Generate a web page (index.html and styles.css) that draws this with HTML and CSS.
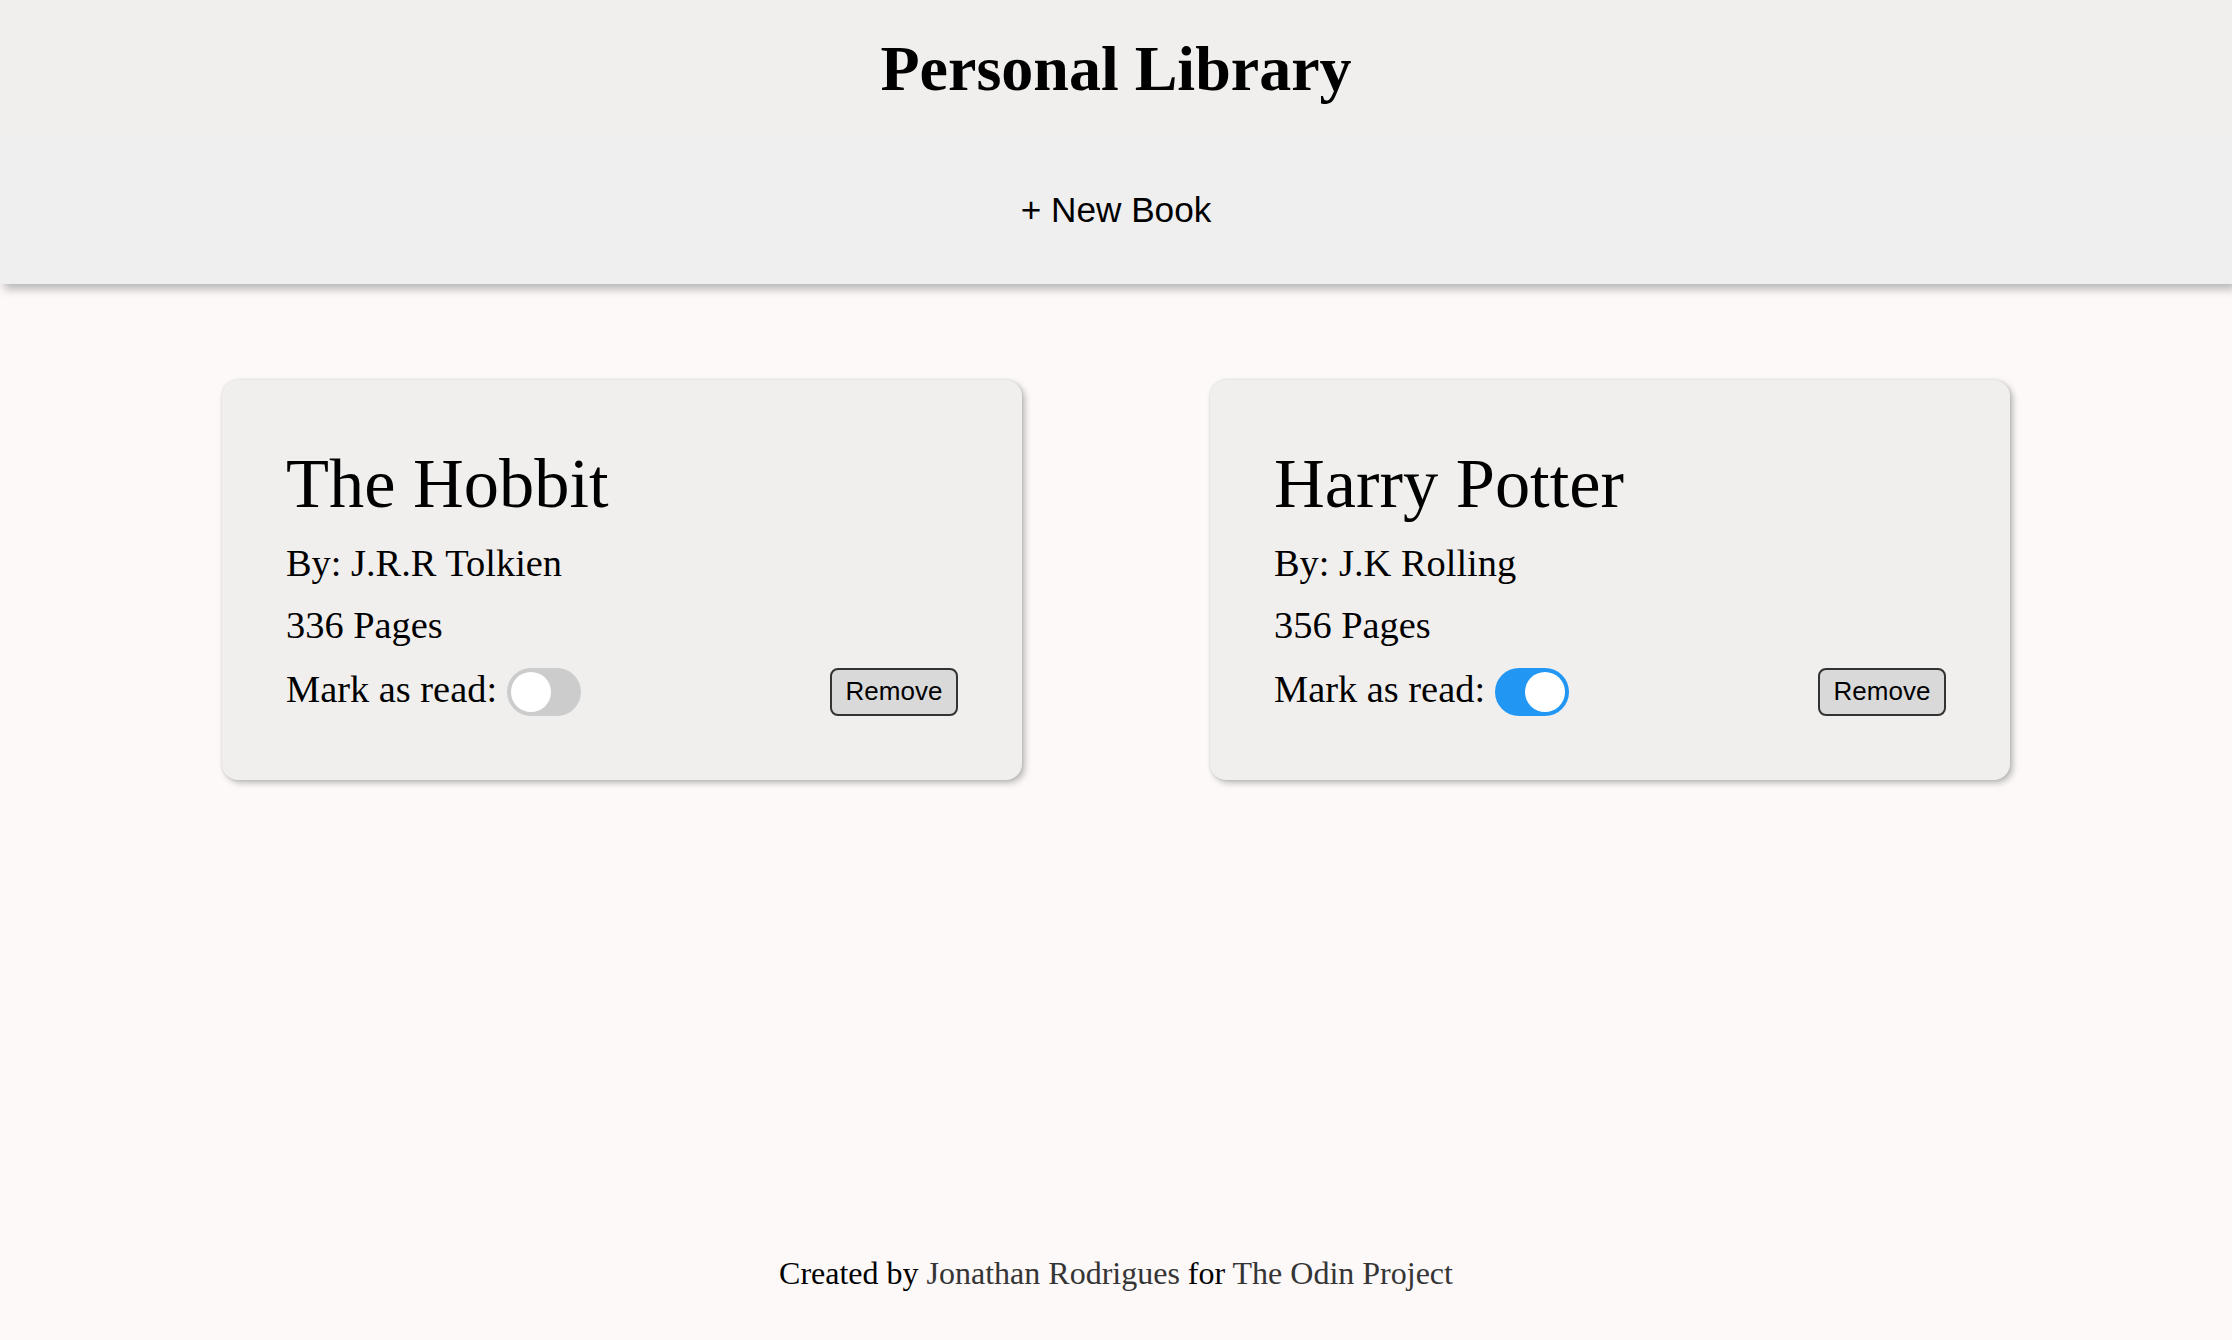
FILE: index.html
```html
<!DOCTYPE html>
<html lang="en">
<head>
<meta charset="utf-8">
<title>Personal Library</title>
<link rel="stylesheet" href="styles.css">
</head>
<body>
<header class="site-header">
  <h1 class="site-title">Personal Library</h1>
  <button class="new-book" type="button">+ New Book</button>
</header>
<main class="library">
  <article class="book-card">
    <h2 class="book-title">The Hobbit</h2>
    <p class="book-line">By: J.R.R Tolkien</p>
    <p class="book-line book-pages">336 Pages</p>
    <div class="book-actions">
      <label class="read-label">
        <span class="read-text">Mark as read:</span>
        <input class="read-input" type="checkbox">
        <span class="switch"></span>
      </label>
      <button class="remove-btn" type="button">Remove</button>
    </div>
  </article>
  <article class="book-card">
    <h2 class="book-title">Harry Potter</h2>
    <p class="book-line">By: J.K Rolling</p>
    <p class="book-line book-pages">356 Pages</p>
    <div class="book-actions">
      <label class="read-label">
        <span class="read-text">Mark as read:</span>
        <input class="read-input" type="checkbox" checked>
        <span class="switch"></span>
      </label>
      <button class="remove-btn" type="button">Remove</button>
    </div>
  </article>
</main>
<footer class="site-footer">
  Created by <a class="footer-link" href="#">Jonathan Rodrigues</a> for <a class="footer-link" href="#">The Odin Project</a>
</footer>
</body>
</html>
```

FILE: styles.css
```css
html, body {
  margin: 0;
  padding: 0;
}

body {
  min-height: 100vh;
  display: flex;
  flex-direction: column;
  background: #fcf9f8;
  color: #000;
  font-family: "Liberation Serif", "Times New Roman", serif;
}

.site-header {
  position: relative;
  z-index: 1;
  background: #f0efee;
  box-shadow: 4px 5px 9px rgba(0, 0, 0, 0.28);
}

.site-title {
  margin: 0;
  padding: 32px 0;
  font-size: 64px;
  font-weight: bold;
  line-height: 73px;
  text-align: center;
}

.new-book {
  display: flex;
  align-items: center;
  justify-content: center;
  width: 100%;
  height: 147px;
  margin: 0;
  padding: 0 0 2px;
  border: 0;
  background: #efefef;
  color: #000;
  font-family: "Liberation Sans", Arial, sans-serif;
  font-size: 35.2px;
  cursor: pointer;
}

.library {
  flex: 1;
  display: flex;
  justify-content: center;
  align-items: flex-start;
  gap: 188px;
  padding-top: 96px;
}

.book-card {
  width: 800px;
  box-sizing: border-box;
  padding: 62.5px 64px 64px;
  background: #f0efee;
  border-radius: 16px;
  box-shadow: 3px 3px 6px rgba(0, 0, 0, 0.25), 0 0 3px rgba(0, 0, 0, 0.12);
}

.book-title {
  margin: 0 0 17.6px;
  font-size: 70.4px;
  font-weight: normal;
  line-height: 80.9px;
}

.book-line {
  margin: 0 0 17.9px;
  font-size: 38.4px;
  line-height: 44.1px;
}

.book-pages {
  margin-bottom: 20.9px;
}

.book-actions {
  display: flex;
  align-items: center;
  justify-content: space-between;
  height: 48px;
}

.read-label {
  display: flex;
  align-items: center;
  font-size: 38.4px;
  line-height: 44.1px;
}

.read-text {
  padding-bottom: 6.5px;
}

.read-input {
  position: absolute;
  opacity: 0;
  width: 0;
  height: 0;
  margin: 0;
}

.switch {
  position: relative;
  display: block;
  width: 74px;
  height: 48px;
  margin-left: 10px;
  border-radius: 24px;
  background: #cccccc;
}

.switch::before {
  content: "";
  position: absolute;
  top: 4px;
  left: 4px;
  width: 40px;
  height: 40px;
  border-radius: 50%;
  background: #ffffff;
}

.read-input:checked + .switch {
  background: #2196f3;
}

.read-input:checked + .switch::before {
  left: 30px;
}

.remove-btn {
  width: 128px;
  height: 48px;
  margin: 0;
  padding: 0;
  border: 2px solid #333333;
  border-radius: 8px;
  background: #d9d9d9;
  color: #000;
  font-family: "Liberation Sans", Arial, sans-serif;
  font-size: 26px;
  cursor: pointer;
}

.site-footer {
  padding: 0 0 48px;
  font-size: 32px;
  line-height: 36.8px;
  text-align: center;
}

.footer-link {
  color: #353535;
  text-decoration: none;
}
```
